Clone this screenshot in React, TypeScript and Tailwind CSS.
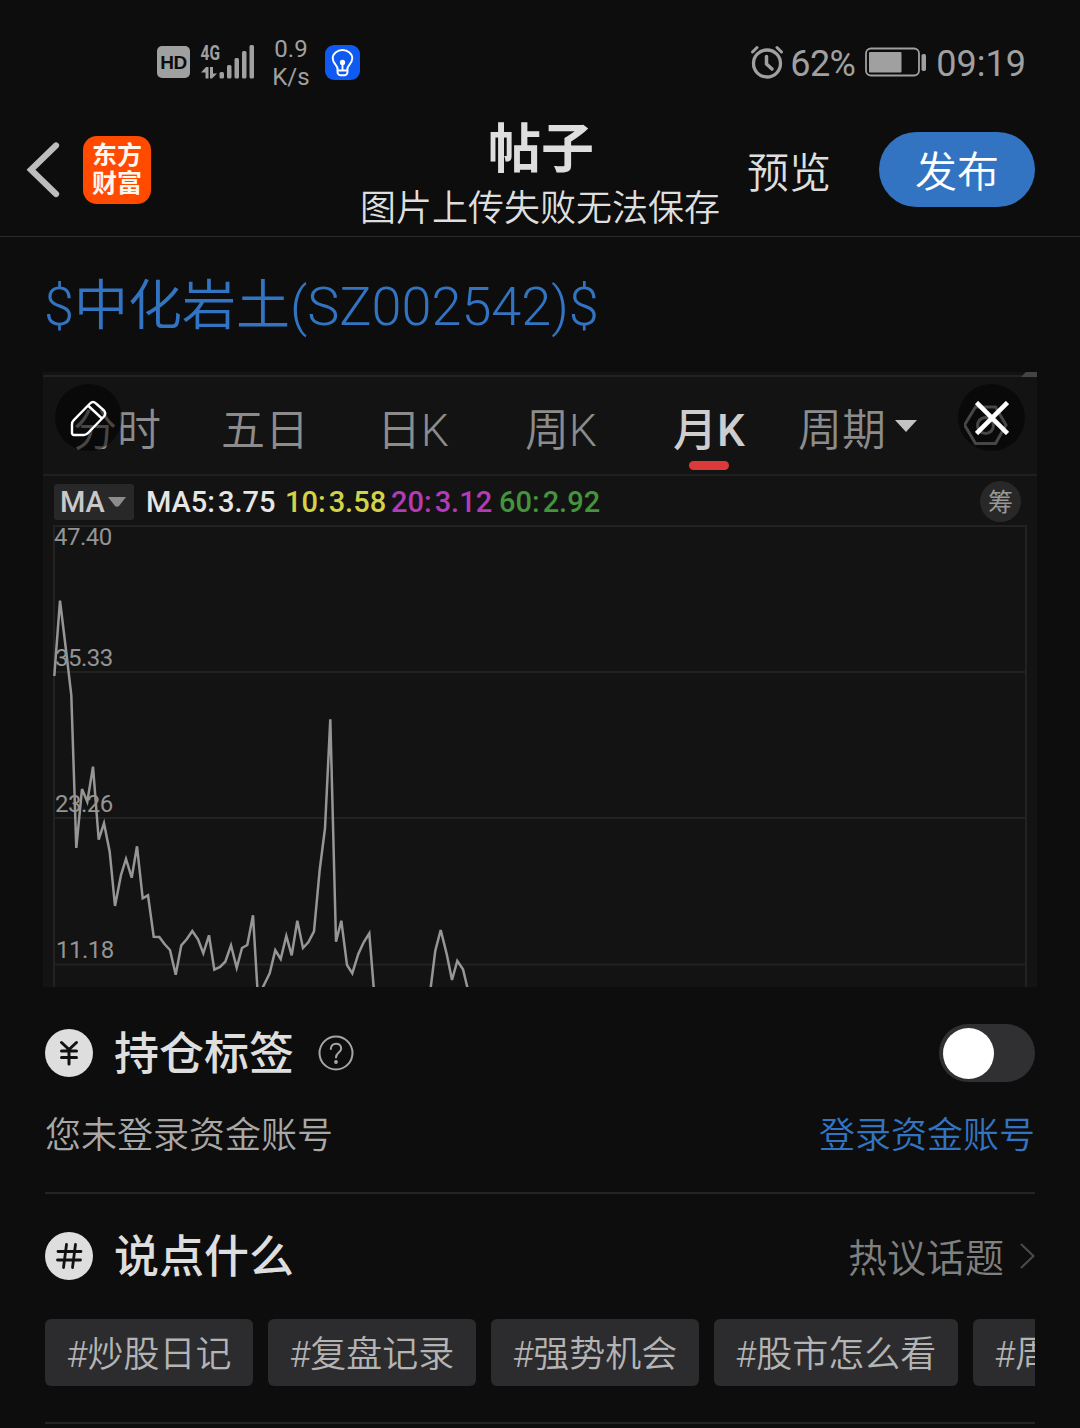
import React from 'react';

const TABS = ['分时', '五日', '日K', '周K', '月K'];

const AVERAGES = [
  { label: 'MA5:', value: '3.75', color: 'text-[#e6e6e6]', width: 'w-[139px]' },
  { label: '10:', value: '3.58', color: 'text-[#d2d348]', width: 'w-[106px]' },
  { label: '20:', value: '3.12', color: 'text-[#b43bb8]', width: 'w-[108px]' },
  { label: '60:', value: '2.92', color: 'text-[#43943c]', width: 'w-[106px]' },
];

const PRICE_LABELS = [
  { value: '47.40', place: 'left-[11px] top-0' },
  { value: '35.33', place: 'left-[12px] top-[121px]' },
  { value: '23.26', place: 'left-[12px] top-[267px]' },
  { value: '11.18', place: 'left-[13px] top-[413px]' },
];

// Monthly price line, split where it drops below the visible area
const PRICE_LINES = [
  '54.3,676 60,600.7 66,650 71.3,695 76.3,848 82,789 87.3,801.7 93,766.7 98.7,839.7 104,823.3 109.7,851.7 115,906 121,875 126,859 131.7,877.7 137,846.3 142.7,898.3 148,895.3 153.7,936.7 159.3,937 164.7,944.3 170,950 175.7,974.7 181.3,945.3 186.7,939.3 192.3,931 198,939.3 203.3,953.3 209,935.3 214.3,969.7 220,967 225.3,961.7 231,945.3 236.7,967.7 242,948 247.3,945 253,915.3 257.5,990',
  '261.5,990 269.7,973.3 275.3,950.3 280.7,959 286.3,936 291.7,955.3 297.3,920.7 303,948 308.3,942.3 314,931.3 319.7,870 325,828.3 330.3,719.3 336,941.7 341.3,920.7 347,965 352.3,973.3 358.3,954 363.7,942.3 369.3,933.3 373.9,990',
  '430.4,990 435.3,950.7 440.7,930 446.7,954 452,980 457.3,961 463,969.3 468,990',
];

const TOPICS = ['#炒股日记', '#复盘记录', '#强势机会', '#股市怎么看', '#周'];

const StatusBar = () => (
  <div className="flex h-[110px] items-start justify-between pl-[157px] pr-[54px] text-[#a0a0a0]">
    <div className="flex pt-[36px]">
      <div className="mt-[10px] flex h-[32px] w-[33px] items-center justify-center rounded-[5px] bg-[#a0a0a0] font-['Liberation_Sans',sans-serif] text-[19px] leading-none font-bold tracking-[-0.5px] text-[#0d0d0d]">
        HD
      </div>
      <div className="ml-[10px] mt-[7px] h-[37px] w-[56px]">
        <svg width="56" height="37" viewBox="200 43 56 37" fill="currentColor">
          <text x="200.5" y="60" fontSize="20.500" fontWeight="700" textLength="19.500" lengthAdjust="spacingAndGlyphs">4G</text>
          <path d="M201 72.500 206 67h2.500v11.500h-3v-6zM210 67h3v6.500h4L212 78.500h-2z" />
          <rect x="219.500" y="72" width="4.500" height="6.500" rx="1.500" />
          <rect x="227" y="65" width="4.500" height="13.500" rx="1.500" />
          <rect x="234.500" y="58" width="4.500" height="20.500" rx="1.500" />
          <rect x="242" y="51" width="4.500" height="27.500" rx="1.500" />
          <rect x="249.500" y="45" width="4.500" height="33.500" rx="1.500" />
        </svg>
      </div>
      <div className="-mt-px ml-[11px] flex w-[48px] flex-col items-center text-[24px] leading-[28px]">
        <span>0.9</span>
        <span>K/s</span>
      </div>
      <div className="ml-[10px] mt-[9px] h-[35px] w-[35px] rounded-[9px] bg-[#0f5af0]">
        <svg width="35" height="35" viewBox="0 0 35 35" fill="none" stroke="#fff" strokeWidth="1.900">
          <path d="M12.500 23.500c0-3.200-4.800-5.200-4.800-10.200a9.800 8.300 0 0 1 19.600 0c0 5-4.800 7-4.800 10.200" />
          <path d="M12.500 23v4c0 2 1.500 3.300 3 3.300h4c1.500 0 3-1.300 3-3.300v-4M17.500 18v6.500M12.500 25.500h10" />
          <circle cx="17.500" cy="17.500" r="1.700" fill="#fff" />
        </svg>
      </div>
    </div>
    <div className="flex items-center pt-[43px] text-[36px] leading-[42px]">
      <svg width="34" height="34" viewBox="0 0 34 34" fill="none" stroke="currentColor" strokeLinecap="round" className="mb-[4px]">
        <circle cx="17" cy="18.500" r="13.500" strokeWidth="3.300" />
        <path d="M2.500 7 7 2.500M31.500 7 27 2.500" strokeWidth="3" />
        <path d="M16.500 11.500v7.500l5.500 5" strokeWidth="3.500" />
      </svg>
      <span className="ml-[6px] w-[66px] tracking-[-0.600px]">62%</span>
      <svg width="62" height="30" viewBox="0 0 62 30" className="ml-[9px] mb-[4px]">
        <rect x="1" y="1.500" width="53" height="27" rx="5" fill="none" stroke="currentColor" strokeWidth="1.800" />
        <rect x="4" y="5" width="32.500" height="20.500" rx="1" fill="currentColor" />
        <rect x="56.500" y="7" width="4.500" height="17" rx="1.800" fill="currentColor" />
      </svg>
      <span className="ml-[9px]">09:19</span>
    </div>
  </div>
);

const Header = () => (
  <div className="grid h-[127px] grid-cols-[361px_358px_361px] border-b border-[#2a2a2a]">
    <div className="flex items-start pl-[26px] pt-[26px]">
      <svg width="36" height="58" viewBox="0 0 36 58" fill="none" stroke="#bdbdbd" strokeWidth="6.200" strokeLinecap="round" className="mt-[5px]">
        <path d="M30 4.500 5 28.800 30 53" strokeLinejoin="miter" />
      </svg>
      <div className="ml-[21px] flex h-[68px] w-[68px] flex-col items-center justify-center rounded-[14px] bg-[#ff4a00] text-[25px] leading-[28px] font-bold text-[#fff6ee]">
        <span>东方</span>
        <span>财富</span>
      </div>
    </div>
    <div className="flex flex-col items-center whitespace-nowrap text-[#dedede]">
      <h1 className="mt-[9px] ml-[2px] text-[53px] leading-[62px] font-bold">帖子</h1>
      <p className="mt-[6px] text-[36px] leading-[44px] font-[350]">图片上传失败无法保存</p>
    </div>
    <div className="flex items-start justify-between pl-[28px] pr-[45px] pt-[22px] text-[42px] font-[350]">
      <button className="mt-[4px] leading-[75px] text-[#dedede]">预览</button>
      <button className="h-[75px] w-[156px] rounded-full bg-[#3274c2] leading-[81px] text-white">发布</button>
    </div>
  </div>
);

const ChartImage = () => (
  <div className="relative ml-[43px] mt-[29px] h-[615px] w-[994px] overflow-hidden bg-[#131313]">
    <div className="flex h-[5px] justify-end border-b-2 border-[#222]">
      <svg width="16" height="5" viewBox="0 0 16 5">
        <path d="M5 0h11v5H0z" fill="#444" />
      </svg>
    </div>
    <div className="flex h-[99px] border-b-2 border-[#1f1f1f] text-[44px] leading-[109px] text-[#8c8c8c]">
      {TABS.map((tab) => (
        <div
          key={tab}
          className={
            tab === '月K'
              ? 'flex w-[148px] flex-col items-center font-medium text-[#cdcdcd]'
              : 'w-[148px] text-center font-[350]'
          }
        >
          <span className="block h-[84px]">{tab}</span>
          {tab === '月K' && <span className="h-[9px] w-[40px] rounded-full bg-[#dc3a3a]" />}
        </div>
      ))}
      <div className="flex w-[148px] items-start pl-[15px] font-[350]">
        <span>周期</span>
        <svg width="22" height="12" viewBox="0 0 22 12" className="ml-[9px] mt-[43px]">
          <path d="M0 0h22L11 12z" fill="#c4c4c4" />
        </svg>
      </div>
      <svg width="54" height="54" viewBox="0 0 54 54" fill="none" stroke="#8c8c8c" strokeWidth="3" className="ml-[33px] mt-[22px]">
        <path d="M11.500 8h20l10.500 18-10.500 18.500h-20L0.500 26z" />
        <circle cx="21.500" cy="26.500" r="8" />
      </svg>
    </div>
    <div className="flex h-[49px] items-center pl-[11px] pt-[2px] text-[29px] leading-[40px] font-medium">
      <div className="flex h-[36px] w-[80px] items-center rounded-[3px] bg-[#282828] pl-[6px] text-[#c8c8c8]">
        <span>MA</span>
        <svg width="18" height="10" viewBox="0 0 18 10" className="ml-[3px]">
          <path d="M0 0h18L11 9q-2 1.500-4 0z" fill="#8c8c8c" />
        </svg>
      </div>
      <div className="ml-[12px] flex">
        {AVERAGES.map((avg) => (
          <span key={avg.label} className={`${avg.color} ${avg.width}`}>
            {avg.label}
            <span className="ml-[3px]">{avg.value}</span>
          </span>
        ))}
      </div>
      <div className="ml-auto mr-[16px] flex h-[41px] w-[41px] items-center justify-center rounded-full bg-[#282828] pt-[3px] text-[25px] font-normal text-[#999]">
        筹
      </div>
    </div>
    <div className="relative">
      <svg width="994" height="462" viewBox="43 525 994 462" fill="none" className="block">
        <path d="M54 990V526H1026V990M54 672H1026M54 818H1026M54 964.500H1026" stroke="#222" strokeWidth="2" />
        {PRICE_LINES.map((points) => (
          <polyline key={points} points={points} stroke="#969696" strokeWidth="2.500" />
        ))}
      </svg>
      {PRICE_LABELS.map((item) => (
        <span
          key={item.value}
          className={`absolute text-[24px] leading-[24px] tracking-[-0.500px] text-[#949494] ${item.place}`}
        >
          {item.value}
        </span>
      ))}
    </div>

    {/* edit / remove controls on top of the picture */}
    <button className="absolute left-[12px] top-[12px] flex h-[67px] w-[67px] items-center justify-center rounded-full bg-black/50">
      <svg width="38" height="38" viewBox="0 0 38 38" fill="none" stroke="#fff" strokeWidth="2.400" strokeLinejoin="round">
        <path d="M2 34.500V25.500Q2 23 3.800 21.200L20 4.500Q23 1.500 26 4.500L34 11.500Q36.500 14.500 34 17.500L18.500 33.500Q16.500 36 14 36H4Q2 36 2 34z" />
        <path d="M18.500 7 32 19.500" />
      </svg>
    </button>
    <button className="absolute left-[915px] top-[12px] flex h-[67px] w-[67px] items-center justify-center rounded-full bg-black/50">
      <svg width="34" height="34" viewBox="0 0 34 34" stroke="#fff" strokeWidth="4.600">
        <path d="M1.500 1.500 32.500 32.500M32.500 1.500 1.500 32.500" />
      </svg>
    </button>
  </div>
);

const PositionSection = () => (
  <div className="mx-[45px] mt-[37px] h-[170px] border-b-2 border-[#242424]">
    <div className="flex h-[58px] items-center">
      <svg width="48" height="48" viewBox="0 0 48 48" fill="none" stroke="#111" strokeWidth="3" strokeLinecap="round">
        <circle cx="24" cy="24" r="24" fill="#dedede" stroke="none" />
        <path d="M16.500 13.500 24 20.500l7.500-7M16.500 22h15M16.500 28.500h15M24 20.500V35" />
      </svg>
      <h2 className="ml-[21px] pt-[4px] text-[45px] leading-[58px] font-medium text-[#dedede]">持仓标签</h2>
      <svg width="36" height="36" viewBox="0 0 36 36" fill="none" stroke="#a6a6a6" strokeWidth="2" className="ml-[24px]">
        <circle cx="18" cy="18" r="16.500" />
        <path d="M12.800 14c0-7 10.400-7 10.400-.5 0 4-5.200 4.300-5.200 9" strokeLinecap="round" />
        <circle cx="18" cy="27" r="1.900" fill="#a6a6a6" stroke="none" />
      </svg>
      <div className="ml-auto flex h-[58px] w-[96px] items-center rounded-full bg-[#303032] pl-[4px]">
        <div className="h-[51px] w-[51px] rounded-full bg-white" />
      </div>
    </div>
    <div className="mt-[30px] flex justify-between text-[36px] leading-[48px] font-[350]">
      <span className="text-[#a8a8a8]">您未登录资金账号</span>
      <span className="text-[#3274c2]">登录资金账号</span>
    </div>
  </div>
);

const TopicSection = () => (
  <div className="mx-[45px] h-[230px] border-b-2 border-[#242424] pt-[33px]">
    <div className="flex h-[58px] items-center">
      <svg width="48" height="48" viewBox="0 0 48 48" fill="none" stroke="#111" strokeWidth="2.800" strokeLinecap="round">
        <circle cx="24" cy="24" r="24" fill="#dedede" stroke="none" />
        <path d="M21.500 12.500 18.500 35.500M30.500 12.500 27.500 35.500M13 19.500h23M12.500 28h23" />
      </svg>
      <h2 className="ml-[21px] pt-[4px] text-[45px] leading-[58px] font-medium text-[#dedede]">说点什么</h2>
      <div className="ml-auto flex items-center text-[39px] leading-[58px] font-[350] text-[#808080]">
        <span className="pt-[5px]">热议话题</span>
        <svg width="15" height="28" viewBox="0 0 15 28" fill="none" stroke="#4a4a4a" strokeWidth="2.200" className="ml-[16px]">
          <path d="M1 2 13.500 14 1 26" />
        </svg>
      </div>
    </div>
    <div className="mt-[34px] flex gap-[15px] overflow-hidden">
      {TOPICS.map((topic) => (
        <span
          key={topic}
          className="h-[67px] shrink-0 rounded-[6px] bg-[#2c2c2e] px-[21.5px] text-[36px] leading-[73px] font-[350] whitespace-nowrap text-[#b4b4b4]"
        >
          {topic}
        </span>
      ))}
    </div>
  </div>
);

const App = () => {
  return (
    <div className="h-[1428px] w-[1080px] overflow-hidden bg-[#0d0d0d] font-[Roboto,'Noto_Sans_CJK_SC',sans-serif]">
      <StatusBar />
      <Header />
      <p className="ml-[44px] mt-[34px] text-[54px] leading-[72px] font-[350] whitespace-nowrap text-[#3274c2]">
        $中化岩土(SZ002542)$
      </p>
      <ChartImage />
      <PositionSection />
      <TopicSection />
    </div>
  );
};

export default App;
